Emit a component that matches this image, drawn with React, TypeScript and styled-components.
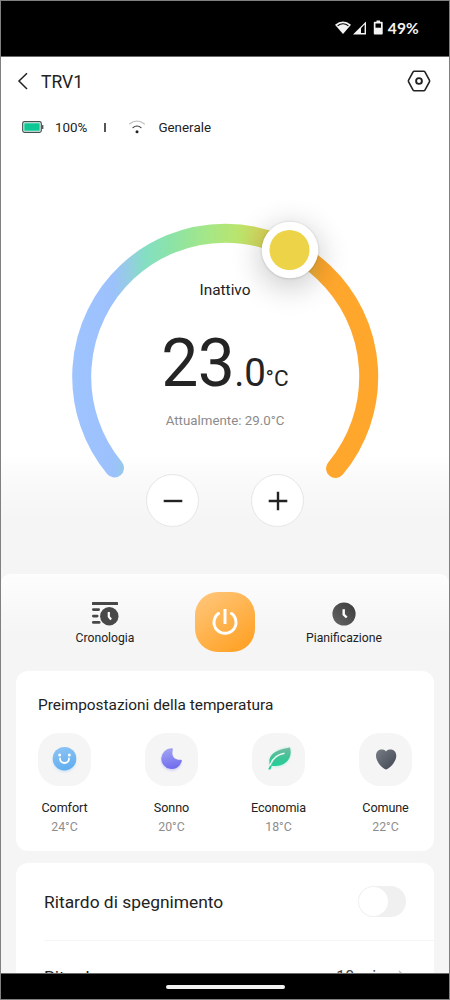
import React from "react";
import styled, { createGlobalStyle } from "styled-components";

const GlobalStyle = createGlobalStyle`
  * { box-sizing: border-box; }
  body { margin: 0; background: #fff; font-family: Roboto, "Liberation Sans", sans-serif; color: #222; }
  button { font: inherit; color: inherit; padding: 0; border: 0; background: none; }
  svg { display: block; flex: none; }
`;

const Phone = styled.div`
  width: 450px;
  height: 1000px;
  border: 1px solid #808080;
  background: #f5f5f5;
  display: flex;
  flex-direction: column;
  overflow: hidden;
`;

const StatusBar = styled.div`
  flex: none;
  height: 56px;
  padding: 0 30px 2px 0;
  background: #000;
  border-bottom: 1px solid #6a6a6a;
  color: #f4f4f4;
  display: flex;
  align-items: center;
  justify-content: flex-end;
`;

const StatusText = styled.span`
  margin-left: 5px;
  font: 700 15.5px/20px Lato, sans-serif;
  letter-spacing: 0.2px;
`;

const Content = styled.main`
  flex: 1;
  min-height: 0;
  overflow: hidden;
  display: flex;
  flex-direction: column;
`;

const Header = styled.header`
  flex: none;
  height: 48px;
  padding: 0 18px 0 16px;
  background: #fff;
  display: flex;
  align-items: center;
`;

const Title = styled.h1`
  flex: 1;
  margin: 2px 0 0 12px;
  font-size: 17.5px;
  font-weight: 400;
  line-height: 24px;
`;

const InfoRow = styled.div`
  flex: none;
  height: 46px;
  padding: 0 0 0 21px;
  background: #fff;
  display: flex;
  align-items: center;
  font-size: 13.4px;
  line-height: 20px;
  > svg { margin-bottom: 2px; }
`;

const Info = styled.span<{ $gap: number }>`
  margin-left: ${(p) => p.$gap}px;
`;

const Tick = styled.i`
  width: 1.5px;
  height: 9px;
  margin: 0 22px 1px 17px;
  background: #555;
`;

const Stage = styled.section`
  flex: none;
  height: 423px;
  display: grid;
  background: linear-gradient(#fff 0, #fff 303px, #fafafa 328px, #f5f5f5 370px);
  > * { grid-area: 1 / 1; }
`;

const Readout = styled.div`
  padding-top: 129px;
  display: flex;
  flex-direction: column;
  align-items: center;
`;

const Mode = styled.div`
  font-size: 15.4px;
  line-height: 20px;
`;

const Temperature = styled.div`
  height: 66px;
  margin: 31px 0 0;
  display: flex;
  align-items: baseline;
  line-height: 66px;
  color: #242424;
`;

const Digits = styled.span<{ $size: number; $spacing?: number }>`
  font-size: ${(p) => p.$size}px;
  letter-spacing: ${(p) => p.$spacing ?? 0}px;
`;

const Current = styled.div`
  margin-top: 14px;
  font-size: 13.3px;
  line-height: 20px;
  color: #8b8b8b;
`;

const Steppers = styled.div`
  display: flex;
  gap: 52px;
  margin-top: 43px;
`;

const RoundButton = styled.button`
  width: 53px;
  height: 53px;
  border: 1px solid #e6e6e6;
  border-radius: 50%;
  background: #fff;
  display: flex;
  align-items: center;
  justify-content: center;
`;

const Sheet = styled.section`
  flex: none;
  border-radius: 9px 9px 0 0;
  background: linear-gradient(#fdfdfd 0, #f5f5f5 62px);
  padding: 0 15px;
`;

const Actions = styled.div`
  height: 97px;
  padding: 18px 35px 0 34px;
  display: grid;
  grid-template-columns: 110px 1fr 110px;
  justify-items: center;
`;

const Action = styled.button`
  height: 60px;
  padding-top: 10px;
  display: flex;
  flex-direction: column;
  align-items: center;
`;

const ActionLabel = styled.span`
  margin-top: 4px;
  font-size: 12.2px;
  line-height: 16px;
`;

const Power = styled.button`
  width: 60px;
  height: 60px;
  border-radius: 23px;
  background: linear-gradient(145deg, #ffc87f, #ffa42b 85%);
  display: flex;
  align-items: center;
  justify-content: center;
`;

const Card = styled.section`
  width: 418px;
  border-radius: 12px;
  background: #fff;
`;

const Presets = styled(Card)`
  height: 180px;
  padding: 23px 22px 0;
`;

const CardTitle = styled.h2`
  margin: 0;
  font-size: 15.4px;
  font-weight: 400;
  line-height: 22px;
`;

const PresetList = styled.div`
  margin-top: 17px;
  display: flex;
  justify-content: space-between;
`;

const Preset = styled.button`
  width: 53px;
  display: flex;
  flex-direction: column;
  align-items: center;
  white-space: nowrap;
`;

const Tile = styled.span`
  width: 53px;
  height: 53px;
  padding-bottom: 2px;
  border-radius: 21px;
  background: #f5f5f5;
  display: flex;
  align-items: center;
  justify-content: center;
`;

const PresetName = styled.span`
  margin-top: 13px;
  font-size: 12.6px;
  line-height: 18px;
  letter-spacing: -0.1px;
`;

const PresetTemp = styled.span`
  margin-top: 1px;
  font-size: 12.3px;
  line-height: 18px;
  color: #8d8d8d;
`;

const Settings = styled(Card)`
  margin-top: 12px;
  padding-left: 28px;
`;

const Setting = styled.div<{ $height: number }>`
  height: ${(p) => p.$height}px;
  padding-right: 28px;
  border-bottom: 1px solid #f5f5f5;
  display: flex;
  align-items: center;
  justify-content: space-between;
  font-size: 17.4px;
  line-height: 24px;
`;

const Value = styled.span`
  display: flex;
  align-items: center;
  gap: 13px;
  font-size: 16px;
  color: #444;
`;

const Switch = styled.span`
  width: 48px;
  height: 31px;
  padding: 1px;
  border-radius: 16px;
  background: #f0f0f0;
  &::before {
    content: "";
    display: block;
    width: 29px;
    height: 29px;
    border-radius: 50%;
    background: #fff;
  }
`;

const NavBar = styled.div`
  flex: none;
  height: 26px;
  border-top: 1px solid #6a6a6a;
  background: #000;
  display: flex;
  align-items: center;
  justify-content: center;
`;

const HomePill = styled.i`
  width: 119px;
  height: 4px;
  border-radius: 2px;
  background: #f2f2f2;
`;

const StatusIcons = () => (
  <svg width="49" height="16" viewBox="0 0 49 16">
    <path d="M1 4.700Q9-1.700 17 4.700L9 14Z" fill="#f4f4f4" />
    <path d="M3.600 5.700Q9 1.900 14.400 5.700" fill="none" stroke="#000" strokeWidth="1.100" />
    <path d="M19 14.500L32 1.500V14.500Z" fill="#f4f4f4" />
    <path d="M27 8.200L30.600 4.600V13.100H27Z" fill="#000" />
    <path d="M39.800 2.500q0-.7.700-.7h2V.6h3.500v1.200h2q.7 0 .7.700v11.300q0 .7-.7.700h-7.500q-.7 0-.7-.7Z" fill="#f4f4f4" />
    <rect x="41.500" y="3.500" width="5.500" height="4.200" fill="#000" />
  </svg>
);

const BackIcon = () => (
  <svg width="12" height="18" viewBox="0 0 12 18">
    <path d="M10 1.200L2 9l8 8" fill="none" stroke="#222" strokeWidth="1.500" />
  </svg>
);

const SettingsIcon = () => (
  <svg width="24" height="24" viewBox="0 0 24 24" fill="none" stroke="#222" strokeLinejoin="round">
    <path d="M7.200 2.200h9.600q.7 0 1.100.7l4.500 8.200q.5.900 0 1.800l-4.500 8.200q-.4.700-1.100.7H7.200q-.7 0-1.100-.7l-4.500-8.200q-.5-.9 0-1.800l4.500-8.200q.4-.7 1.100-.7Z" strokeWidth="1.600" />
    <circle cx="12" cy="12" r="2.900" strokeWidth="1.900" />
  </svg>
);

const BatteryIcon = () => (
  <svg width="22" height="12" viewBox="0 0 22 12">
    <rect x=".7" y=".7" width="18.600" height="10.600" rx="1.800" fill="#e4faf4" stroke="#45524f" strokeWidth="1.200" />
    <rect x="2.300" y="2.300" width="15.400" height="7.400" rx=".5" fill="#0dc794" />
    <path d="M20.700 4v4" stroke="#45524f" strokeWidth="1.300" />
  </svg>
);

const WifiIcon = () => (
  <svg width="18" height="14" viewBox="0 0 18 14" fill="none" strokeLinecap="round">
    <path d="M1.500 4Q9-2 16.500 4" stroke="#bdbdbd" strokeWidth="1.100" />
    <path d="M5 7.600Q9 4.400 13 7.600" stroke="#333" strokeWidth="1.200" />
    <circle cx="9" cy="11.700" r="1.500" fill="#222" />
  </svg>
);

const ChevronIcon = () => (
  <svg width="8" height="14" viewBox="0 0 8 14">
    <path d="M1 1l6 6-6 6" fill="none" stroke="#bbb" strokeWidth="1.300" />
  </svg>
);

const Dial = () => (
  <svg width="448" height="423" viewBox="0 0 448 423">
    <defs>
      <linearGradient id="arc" gradientUnits="userSpaceOnUse" x1="71" y1="0" x2="377" y2="0">
        <stop offset="0" stopColor="#9ec4ff" />
        <stop offset=".13" stopColor="#9cc1fd" />
        <stop offset=".18" stopColor="#96cbe5" />
        <stop offset=".24" stopColor="#84dfc2" />
        <stop offset=".32" stopColor="#8be3a8" />
        <stop offset=".45" stopColor="#a6e785" />
        <stop offset=".55" stopColor="#bce46c" />
        <stop offset=".62" stopColor="#d6d65c" />
        <stop offset=".72" stopColor="#e9c84a" />
        <stop offset=".78" stopColor="#f0b33c" />
        <stop offset=".82" stopColor="#ffa72d" />
        <stop offset="1" stopColor="#ffa72d" />
      </linearGradient>
      <filter id="knobShadow" x="-100%" y="-100%" width="300%" height="300%">
        <feGaussianBlur stdDeviation="15" />
      </filter>
      <filter id="knobEdge" x="-20%" y="-20%" width="140%" height="140%">
        <feGaussianBlur stdDeviation=".8" />
      </filter>
    </defs>
    <path d="M113.500 317A143.500 143.500 0 1 1 334.500 317.500" fill="none" stroke="url(#arc)" strokeWidth="19" strokeLinecap="round" />
    <circle cx="289" cy="106" r="31" fill="#000" opacity=".2" filter="url(#knobShadow)" />
    <circle cx="289" cy="99.300" r="28.500" fill="#000" opacity=".16" filter="url(#knobEdge)" />
    <circle cx="289" cy="99" r="28.300" fill="#fff" />
    <circle cx="288.500" cy="99" r="20" fill="#ecd347" />
  </svg>
);

const HistoryIcon = () => (
  <svg width="28" height="24" viewBox="0 0 28 24">
    <g fill="#484848">
      <rect x="1" y="0" width="26" height="3" rx=".6" />
      <rect x="1" y="6.200" width="8" height="2.700" rx="1.300" />
      <rect x="1" y="12.700" width="6.500" height="2.700" rx="1.300" />
      <rect x="1" y="19" width="8.500" height="2.700" rx="1.300" />
      <circle cx="18.300" cy="14.300" r="9.200" />
    </g>
    <path d="M17.800 10v4.700l2.300 2.800" fill="none" stroke="#fff" strokeWidth="2.200" />
  </svg>
);

const ClockIcon = () => (
  <svg width="24" height="24" viewBox="0 0 24 24">
    <defs>
      <linearGradient id="clock" x1="0" y1="1" x2="1" y2="0">
        <stop stopColor="#666" />
        <stop offset="1" stopColor="#3b3b3b" />
      </linearGradient>
    </defs>
    <circle cx="12" cy="12" r="11.600" fill="url(#clock)" />
    <path d="M11.700 7.300v5.200l3 3" fill="none" stroke="#fff" strokeWidth="2.400" />
  </svg>
);

const PowerIcon = () => (
  <svg width="28" height="28" viewBox="0 0 28 28" fill="none" stroke="#fff" strokeWidth="3">
    <path d="M14 1v15" />
    <path d="M7.500 5.500A11 11 0 1 0 20.500 5.500" strokeLinecap="round" />
  </svg>
);

const SmileIcon = () => (
  <svg width="32" height="32" viewBox="0 0 32 32">
    <defs>
      <linearGradient id="smile" x1="0" y1="0" x2=".3" y2="1">
        <stop stopColor="#8fc5f5" />
        <stop offset="1" stopColor="#64aff0" />
      </linearGradient>
      <filter id="smileGlow"><feGaussianBlur stdDeviation="1.500" /></filter>
    </defs>
    <circle cx="15.500" cy="17.500" r="11" fill="#9ccdf8" opacity=".6" filter="url(#smileGlow)" />
    <circle cx="15.500" cy="15.700" r="11.800" fill="url(#smile)" />
    <circle cx="10.700" cy="12" r="1.500" fill="#fff" />
    <circle cx="20.300" cy="12" r="1.500" fill="#fff" />
    <path d="M11 15.500c0 6 9 6 9 0" fill="none" stroke="#fff" strokeWidth="1.800" strokeLinecap="round" />
  </svg>
);

const MoonIcon = () => (
  <svg width="32" height="32" viewBox="0 0 32 32">
    <defs>
      <linearGradient id="moon" x1="0" y1="0" x2=".2" y2="1">
        <stop stopColor="#a5a8f3" />
        <stop offset="1" stopColor="#726eee" />
      </linearGradient>
      <filter id="moonGlow"><feGaussianBlur stdDeviation="1.200" /></filter>
    </defs>
    <path d="M15.500 5.500A10.300 10.300 0 1 0 25.700 18.300C19 19.500 13.500 12 15.500 5.500Z" transform="translate(0 1.500)" fill="#aaa7ff" opacity=".5" filter="url(#moonGlow)" />
    <path d="M15.300 5.200A10.400 10.400 0 1 0 25.700 18.400Q26.400 16.800 24.700 16.800C18.500 17.200 15 13 16.800 7Q17.300 5 15.300 5.200Z" fill="url(#moon)" />
  </svg>
);

const LeafIcon = () => (
  <svg width="32" height="32" viewBox="0 0 32 32">
    <defs>
      <linearGradient id="leaf" x1=".3" y1="0" x2=".3" y2="1">
        <stop stopColor="#72b9a0" />
        <stop offset=".5" stopColor="#38c596" />
        <stop offset="1" stopColor="#1bd49b" />
      </linearGradient>
      <filter id="leafGlow"><feGaussianBlur stdDeviation="1.500" /></filter>
    </defs>
    <path d="M26 5C18 5 6 10 7 22C18 27 29 18 27 5Z" fill="#70edc7" opacity=".6" filter="url(#leafGlow)" />
    <path d="M27 4.500C18 6 6.500 9 6.400 18.500Q6.500 21.500 7 22.500L5.300 26Q6.300 27.400 7.700 26L8.800 22.700C20 24.500 30.500 17 27 4.500Z" fill="url(#leaf)" />
    <path d="M7.200 22.500C9 16 14 11.500 21.500 10.200" fill="none" stroke="#f5f5f5" strokeWidth="1.400" />
  </svg>
);

const HeartIcon = () => (
  <svg width="32" height="32" viewBox="0 0 32 32">
    <defs>
      <linearGradient id="heart" x1="0" y1="0" x2="1" y2="1">
        <stop stopColor="#777c85" />
        <stop offset=".6" stopColor="#565b65" />
        <stop offset="1" stopColor="#414853" />
      </linearGradient>
    </defs>
    <path d="M16 8.500C13.500 5.200 6 6 6 12.800C6 19 12 24.500 14.700 26.100Q16 27 17.300 26.100C20 24.500 26.300 19 26.300 12.800C26.300 6 18.500 5.200 16 8.500Z" fill="url(#heart)" />
  </svg>
);

const presets = [
  { name: "Comfort", temp: "24°C", icon: <SmileIcon /> },
  { name: "Sonno", temp: "20°C", icon: <MoonIcon /> },
  { name: "Economia", temp: "18°C", icon: <LeafIcon /> },
  { name: "Comune", temp: "22°C", icon: <HeartIcon /> },
];

export default function App() {
  return (
    <Phone>
      <GlobalStyle />
      <StatusBar>
        <StatusIcons />
        <StatusText>49%</StatusText>
      </StatusBar>
      <Content>
        <Header>
          <BackIcon />
          <Title>TRV1</Title>
          <SettingsIcon />
        </Header>
        <InfoRow>
          <BatteryIcon />
          <Info $gap={11}>100%</Info>
          <Tick />
          <WifiIcon />
          <Info $gap={12.5}>Generale</Info>
        </InfoRow>
        <Stage>
          <Dial />
          <Readout>
            <Mode>Inattivo</Mode>
            <Temperature>
              <Digits $size={66} $spacing={-0.6}>23</Digits>
              <Digits $size={38.5} $spacing={-0.3}>.0</Digits>
              <Digits $size={22.5}>°C</Digits>
            </Temperature>
            <Current>Attualmente: 29.0°C</Current>
            <Steppers>
              <RoundButton aria-label="Diminuisci">
                <svg width="20" height="20" viewBox="0 0 20 20"><path d="M.7 10h18.600" stroke="#222" strokeWidth="2.400" /></svg>
              </RoundButton>
              <RoundButton aria-label="Aumenta">
                <svg width="20" height="20" viewBox="0 0 20 20"><path d="M.7 10h18.600M10 .7v18.600" stroke="#222" strokeWidth="2.400" /></svg>
              </RoundButton>
            </Steppers>
          </Readout>
        </Stage>
        <Sheet>
          <Actions>
            <Action>
              <HistoryIcon />
              <ActionLabel>Cronologia</ActionLabel>
            </Action>
            <Power aria-label="Accensione"><PowerIcon /></Power>
            <Action>
              <ClockIcon />
              <ActionLabel>Pianificazione</ActionLabel>
            </Action>
          </Actions>
          <Presets>
            <CardTitle>Preimpostazioni della temperatura</CardTitle>
            <PresetList>
              {presets.map((p) => (
                <Preset key={p.name}>
                  <Tile>{p.icon}</Tile>
                  <PresetName>{p.name}</PresetName>
                  <PresetTemp>{p.temp}</PresetTemp>
                </Preset>
              ))}
            </PresetList>
          </Presets>
          <Settings>
            <Setting $height={78}>
              Ritardo di spegnimento
              <Switch />
            </Setting>
            <Setting $height={73}>
              Ritardo
              <Value>
                10 min
                <ChevronIcon />
              </Value>
            </Setting>
          </Settings>
        </Sheet>
      </Content>
      <NavBar><HomePill /></NavBar>
    </Phone>
  );
}
